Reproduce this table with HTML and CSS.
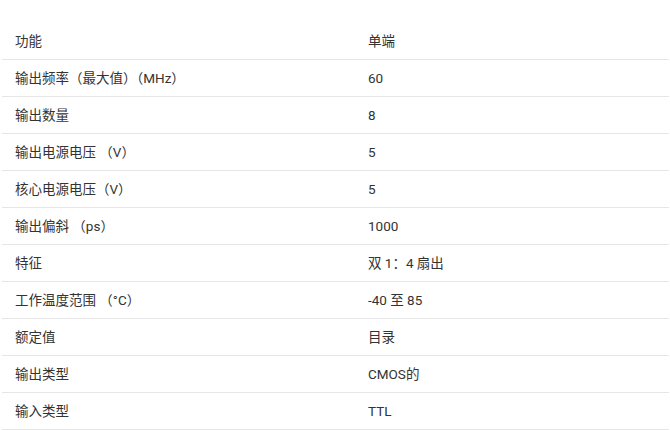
FILE: index.html
```html
<!DOCTYPE html>
<html lang="zh-CN">
<head>
<meta charset="utf-8">
<link rel="stylesheet" href="styles.css">
</head>
<body>
<div class="page">
<table class="spec">
<tbody>
<tr><td>功能</td><td>单端</td></tr>
<tr><td>输出频率（最大值）（MHz）</td><td>60</td></tr>
<tr><td>输出数量</td><td>8</td></tr>
<tr><td>输出电源电压 （V）</td><td>5</td></tr>
<tr><td>核心电源电压（V）</td><td>5</td></tr>
<tr><td>输出偏斜 （ps）</td><td>1000</td></tr>
<tr><td>特征</td><td>双 1：4 扇出</td></tr>
<tr><td>工作温度范围 （°C）</td><td>-40 至 85</td></tr>
<tr><td>额定值</td><td>目录</td></tr>
<tr><td>输出类型</td><td>CMOS的</td></tr>
<tr><td>输入类型</td><td>TTL</td></tr>
</tbody>
</table>
</div>
</body>
</html>
```
FILE: styles.css
```css
html, body {
  margin: 0;
  padding: 0;
  background: #fff;
}
.page {
  padding: 23px 1px 0 2px;
}
.spec {
  width: 100%;
  border-collapse: collapse;
  font-family: Roboto, "Noto Sans CJK SC", sans-serif;
  font-size: 13.5px;
  color: #333;
}
.spec td {
  height: 36px;
  padding: 0 13px;
  border-bottom: 1px solid #e6e6e6;
  vertical-align: middle;
  line-height: 16px;
}
.spec td:first-child {
  width: 327px;
}
```
